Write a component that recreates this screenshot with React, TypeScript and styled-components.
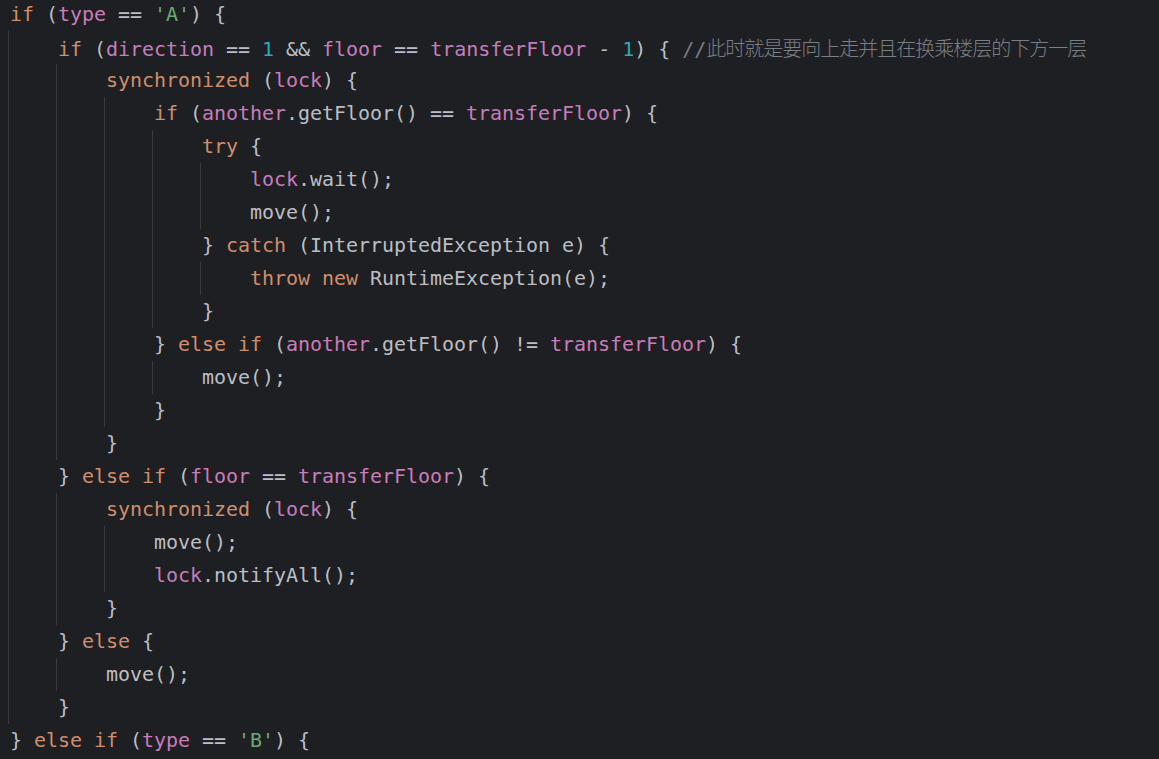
import React from "react";
import styled, { createGlobalStyle } from "styled-components";

const GlobalStyle = createGlobalStyle`
  html, body {
    margin: 0;
    padding: 0;
    background: #1e1f22;
    overflow: hidden;
  }
`;

type Kind = "k" | "f" | "n" | "s" | "t" | "c";

const colors: Record<Kind, string> = {
  k: "#cf8e6d",
  f: "#c77dbb",
  n: "#2aacb8",
  s: "#6aab73",
  t: "#bcbec4",
  c: "#7a7e85",
};

const Editor = styled.div`
  width: 1159px;
  height: 759px;
  background: #1e1f22;
  overflow: hidden;
  font-family: "DejaVu Sans Mono", "Noto Sans CJK SC", monospace;
  font-size: 20px;
  letter-spacing: -0.04px;
`;

const Lines = styled.div`
  display: flex;
  flex-direction: column;
  margin-top: -2px;
  padding-left: 8px;
`;

const Row = styled.div`
  display: flex;
  align-items: stretch;
  height: 33px;
`;

const Indent = styled.div`
  flex: 0 0 48px;
  box-sizing: border-box;
  border-left: 1px solid #393b40;
`;

const Text = styled.div`
  margin-left: 2px;
  line-height: 33px;
  white-space: pre;
`;

const Token = styled.span<{ $kind: Kind }>`
  color: ${(p) => colors[p.$kind]};
`;

const Cjk = styled.span`
  font-family: "Noto Sans CJK SC", sans-serif;
  font-weight: 300;
  letter-spacing: -1px;
`;

type Tok = [Kind, string];
type Line = { indent: number; toks: Tok[] };

const L = (indent: number, ...toks: Tok[]): Line => ({ indent, toks });

const code: Line[] = [
  L(0, ["k", "if"], ["t", " ("], ["f", "type"], ["t", " == "], ["s", "'A'"], ["t", ") {"]),
  L(
    1,
    ["k", "if"],
    ["t", " ("],
    ["f", "direction"],
    ["t", " == "],
    ["n", "1"],
    ["t", " && "],
    ["f", "floor"],
    ["t", " == "],
    ["f", "transferFloor"],
    ["t", " - "],
    ["n", "1"],
    ["t", ") { "],
    ["c", "//"]
  ),
  L(2, ["k", "synchronized"], ["t", " ("], ["f", "lock"], ["t", ") {"]),
  L(3, ["k", "if"], ["t", " ("], ["f", "another"], ["t", ".getFloor() == "], ["f", "transferFloor"], ["t", ") {"]),
  L(4, ["k", "try"], ["t", " {"]),
  L(5, ["f", "lock"], ["t", ".wait();"]),
  L(5, ["t", "move();"]),
  L(4, ["t", "} "], ["k", "catch"], ["t", " (InterruptedException e) {"]),
  L(5, ["k", "throw new"], ["t", " RuntimeException(e);"]),
  L(4, ["t", "}"]),
  L(3, ["t", "} "], ["k", "else if"], ["t", " ("], ["f", "another"], ["t", ".getFloor() != "], ["f", "transferFloor"], ["t", ") {"]),
  L(4, ["t", "move();"]),
  L(3, ["t", "}"]),
  L(2, ["t", "}"]),
  L(1, ["t", "} "], ["k", "else if"], ["t", " ("], ["f", "floor"], ["t", " == "], ["f", "transferFloor"], ["t", ") {"]),
  L(2, ["k", "synchronized"], ["t", " ("], ["f", "lock"], ["t", ") {"]),
  L(3, ["t", "move();"]),
  L(3, ["f", "lock"], ["t", ".notifyAll();"]),
  L(2, ["t", "}"]),
  L(1, ["t", "} "], ["k", "else"], ["t", " {"]),
  L(2, ["t", "move();"]),
  L(1, ["t", "}"]),
  L(0, ["t", "} "], ["k", "else if"], ["t", " ("], ["f", "type"], ["t", " == "], ["s", "'B'"], ["t", ") {"]),
];

const COMMENT_TEXT = "此时就是要向上走并且在换乘楼层的下方一层";

export default function App() {
  return (
    <>
      <GlobalStyle />
      <Editor>
        <Lines>
          {code.map((line, i) => (
            <Row key={i}>
              {Array.from({ length: line.indent }).map((_, j) => (
                <Indent key={j} />
              ))}
              <Text>
                {line.toks.map(([kind, text], j) => (
                  <Token key={j} $kind={kind}>
                    {text}
                    {kind === "c" ? <Cjk>{COMMENT_TEXT}</Cjk> : null}
                  </Token>
                ))}
              </Text>
            </Row>
          ))}
        </Lines>
      </Editor>
    </>
  );
}
